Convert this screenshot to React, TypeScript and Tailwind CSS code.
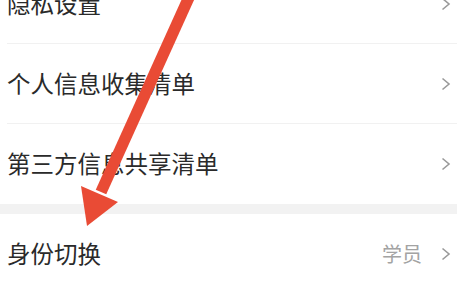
const Chevron = () => (
  <svg width="10" height="14" viewBox="0 0 10 14" className="shrink-0">
    <polyline points="1.5,1.5 8,7 1.5,12.5" fill="none" stroke="#9a9a9a" strokeWidth="1.6" />
  </svg>
);

const Row = ({ label, value, divider }: { label: string; value?: string; divider?: boolean }) => (
  <div className="pl-[7px]">
    <div className={`flex h-[80px] items-center pr-[6px] ${divider ? 'border-b border-[#f1f1f1]' : ''}`}>
      <span className="flex-1 text-[23.5px] text-[#2a2a2a]">{label}</span>
      {value && <span className="mr-[19px] text-[20px] text-[#a3a3a3]">{value}</span>}
      <Chevron />
    </div>
  </div>
);

export default function App() {
  return (
    <div
      className="relative h-[288px] w-[457px] overflow-hidden bg-white"
      style={{ fontFamily: '"Noto Sans CJK SC", "Noto Sans", sans-serif' }}
    >
      <div className="-mt-[36px]">
        <Row label="隐私设置" divider />
        <Row label="个人信息收集清单" divider />
        <Row label="第三方信息共享清单" />
        <div className="h-[10px] bg-[#f2f2f2]" />
        <Row label="身份切换" value="学员" />
      </div>

      {/* red annotation arrow */}
      <svg className="absolute left-0 top-0" width="457" height="288" viewBox="0 0 457 288">
        <line x1="190" y1="-5" x2="101" y2="192" stroke="#e94b35" strokeWidth="11.5" />
        <polygon points="81,186 118,202 87,226" fill="#e94b35" />
      </svg>
    </div>
  );
}
